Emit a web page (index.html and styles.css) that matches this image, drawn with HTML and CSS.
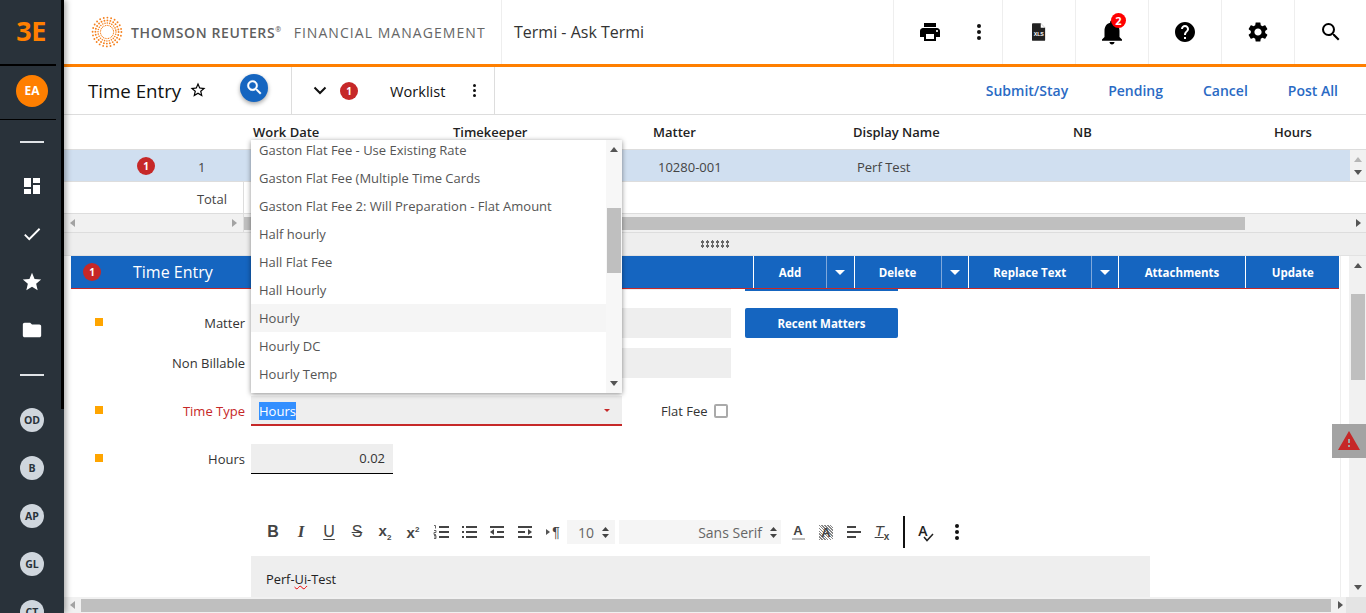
FILE: index.html
```html
<!DOCTYPE html>
<html lang="en">

<head>
    <meta charset="utf-8">
    <title>Time Entry</title>
    <link rel="stylesheet" href="styles.css">
</head>

<body>
    <div class="app">
        <nav class="sidebar">
            <div class="brand">3E</div>
            <div class="user-wrap"><div class="user">EA</div></div>
            <div class="nav-rule first"></div>
            <div class="nav-icon">
                <svg width="16" height="16" viewBox="0 0 16 16"><path fill="#fff" d="M0 0h7v9H0zM9 0h7v5H9zM9 7h7v9H9zM0 11h7v5H0z"/></svg>
            </div>
            <div class="nav-icon">
                <svg width="22" height="22" viewBox="0 0 24 24"><path fill="#fff" d="M9 16.17L4.83 12l-1.42 1.41L9 19 21 7l-1.41-1.41z"/></svg>
            </div>
            <div class="nav-icon">
                <svg width="22" height="22" viewBox="0 0 24 24"><path fill="#fff" d="M12 17.27L18.18 21l-1.64-7.03L22 9.24l-7.19-.61L12 2 9.19 8.63 2 9.24l5.46 4.73L5.82 21z"/></svg>
            </div>
            <div class="nav-icon">
                <svg width="22" height="22" viewBox="0 0 24 24"><path fill="#fff" d="M10 4H4c-1.1 0-1.99.9-1.99 2L2 18c0 1.1.9 2 2 2h16c1.1 0 2-.9 2-2V8c0-1.1-.9-2-2-2h-8l-2-2z"/></svg>
            </div>
            <div class="nav-rule second"></div>
            <div class="nav-pill">OD</div>
            <div class="nav-pill">B</div>
            <div class="nav-pill">AP</div>
            <div class="nav-pill">GL</div>
            <div class="nav-pill">CT</div>
            <div class="nav-scroll"></div>
        </nav>

        <main class="content">
            <header class="topbar">
                <div class="logo">
                    <svg width="32" height="32" viewBox="0 0 32 32">
                        <g fill="none" stroke="#f58220" stroke-linecap="round">
                            <circle cx="16" cy="16" r="14.4" stroke-width="1.9" stroke-dasharray="0 3.77"/>
                            <circle cx="16" cy="16" r="11.6" stroke-width="1.9" stroke-dasharray="0 3.04"/>
                            <circle cx="16" cy="16" r="9" stroke-width="1.6" stroke-dasharray="0 2.36"/>
                            <circle cx="16" cy="16" r="6.6" stroke-width="1.2" stroke-dasharray="0 1.73"/>
                        </g>
                    </svg>
                    <span class="logo-tr">THOMSON REUTERS<sup>®</sup></span>
                    <span class="logo-fm">FINANCIAL MANAGEMENT</span>
                </div>
                <div class="app-title">Termi - Ask Termi</div>
                <div class="top-cell wide">
                    <svg width="24" height="24" viewBox="0 0 24 24"><path d="M19 8H5c-1.66 0-3 1.34-3 3v6h4v4h12v-4h4v-6c0-1.66-1.34-3-3-3zm-3 11H8v-5h8v5zm3-7c-.55 0-1-.45-1-1s.45-1 1-1 1 .45 1 1-.45 1-1 1zm-1-9H6v4h12V3z"/></svg>
                    <span class="kebab"><i></i><i></i><i></i></span>
                </div>
                <div class="top-cell">
                    <svg width="14" height="18" viewBox="0 0 16 20">
                        <path fill="#222" d="M1 0h9l5 5v14a1 1 0 0 1-1 1H1a1 1 0 0 1-1-1V1a1 1 0 0 1 1-1z"/>
                        <path fill="#fff" d="M10 0l5 5h-5z"/>
                        <text x="7.7" y="14.5" class="xls-text">XLS</text>
                    </svg>
                </div>
                <div class="top-cell">
                    <span class="bell">
                        <svg width="30" height="30" viewBox="0 0 24 24"><path d="M12 22c1.1 0 2-.9 2-2h-4c0 1.1.9 2 2 2zm6-6v-5c0-3.07-1.63-5.64-4.5-6.32V4c0-.83-.67-1.5-1.5-1.5s-1.5.67-1.5 1.5v.68C7.64 5.36 6 7.92 6 11v5l-2 2v1h16v-1l-2-2z"/></svg>
                        <b class="bell-count">2</b>
                    </span>
                </div>
                <div class="top-cell">
                    <svg width="24" height="24" viewBox="0 0 24 24"><path d="M12 2C6.48 2 2 6.48 2 12s4.48 10 10 10 10-4.48 10-10S17.52 2 12 2zm1 17h-2v-2h2v2zm2.07-7.75l-.9.92C13.45 12.9 13 13.5 13 15h-2v-.5c0-1.1.45-2.1 1.17-2.83l1.24-1.26c.37-.36.59-.86.59-1.41 0-1.1-.9-2-2-2s-2 .9-2 2H8c0-2.21 1.79-4 4-4s4 1.79 4 4c0 .88-.36 1.68-.93 2.25z"/></svg>
                </div>
                <div class="top-cell">
                    <svg width="24" height="24" viewBox="0 0 24 24"><path d="M19.14 12.94c.04-.3.06-.61.06-.94 0-.32-.02-.64-.07-.94l2.03-1.58c.18-.14.23-.41.12-.61l-1.92-3.32c-.12-.22-.37-.29-.59-.22l-2.39.96c-.5-.38-1.03-.7-1.62-.94l-.36-2.54c-.04-.24-.24-.41-.48-.41h-3.84c-.24 0-.43.17-.47.41l-.36 2.54c-.59.24-1.13.57-1.62.94l-2.39-.96c-.22-.08-.47 0-.59.22L2.74 8.87c-.12.21-.08.47.12.61l2.03 1.58c-.05.3-.09.63-.09.94s.02.64.07.94l-2.03 1.58c-.18.14-.23.41-.12.61l1.92 3.32c.12.22.37.29.59.22l2.39-.96c.5.38 1.03.7 1.62.94l.36 2.54c.05.24.24.41.48.41h3.84c.24 0 .44-.17.47-.41l.36-2.54c.59-.24 1.13-.56 1.62-.94l2.39.96c.22.08.47 0 .59-.22l1.92-3.32c.12-.22.07-.47-.12-.61l-2.01-1.58zM12 15.6c-1.98 0-3.6-1.62-3.6-3.6s1.62-3.6 3.6-3.6 3.6 1.62 3.6 3.6-1.62 3.6-3.6 3.6z"/></svg>
                </div>
                <div class="top-cell last">
                    <svg width="24" height="24" viewBox="0 0 24 24"><path d="M15.5 14h-.79l-.28-.27A6.471 6.471 0 0 0 16 9.5 6.5 6.5 0 1 0 9.5 16c1.61 0 3.09-.59 4.23-1.57l.27.28v.79l5 4.99L20.49 19l-4.99-5zm-6 0C7.01 14 5 11.99 5 9.5S7.01 5 9.5 5 14 7.01 14 9.5 11.99 14 9.5 14z"/></svg>
                </div>
            </header>

            <section class="subbar">
                <div class="sub-title">
                    <h1>Time Entry</h1>
                    <svg width="18" height="18" viewBox="0 0 24 24"><path d="M22 9.24l-7.19-.62L12 2 9.19 8.63 2 9.24l5.46 4.73L5.82 21 12 17.27 18.18 21l-1.63-7.03L22 9.24zM12 15.4l-3.76 2.27 1-4.28-3.32-2.88 4.38-.38L12 6.1l1.71 4.04 4.38.38-3.32 2.88 1 4.28L12 15.4z"/></svg>
                    <button class="round-search">
                        <svg width="19" height="19" viewBox="0 0 24 24"><path fill="#fff" stroke="#fff" stroke-width=".6" d="M15.5 14h-.79l-.28-.27A6.471 6.471 0 0 0 16 9.5 6.5 6.5 0 1 0 9.5 16c1.61 0 3.09-.59 4.23-1.57l.27.28v.79l5 4.99L20.49 19l-4.99-5zm-6 0C7.01 14 5 11.99 5 9.5S7.01 5 9.5 5 14 7.01 14 9.5 11.99 14 9.5 14z"/></svg>
                    </button>
                </div>
                <div class="worklist">
                    <svg class="chev" width="14" height="9" viewBox="0 0 14 9"><path fill="none" stroke="#111" stroke-width="2" d="M1.5 1.5L7 7l5.5-5.5"/></svg>
                    <span class="badge">1</span>
                    <span class="worklist-name">Worklist</span>
                    <span class="kebab small"><i></i><i></i><i></i></span>
                </div>
                <div class="actions">
                    <a>Submit/Stay</a>
                    <a>Pending</a>
                    <a>Cancel</a>
                    <a>Post All</a>
                </div>
            </section>

            <div class="grid-row grid-head">
                <span></span><span>Work Date</span><span>Timekeeper</span><span>Matter</span><span>Display Name</span><span>NB</span><span>Hours</span>
            </div>
            <div class="sel-row">
                <div class="sel-index">
                    <span class="badge">1</span>
                    <span class="row-no">1</span>
                </div>
                <span class="cell-matter">10280-001</span>
                <span class="cell-name">Perf Test</span>
                <div class="row-scroll">
                    <i class="arrow up faded"></i>
                    <i class="arrow down"></i>
                </div>
            </div>
            <div class="total-row"><span class="total-label">Total</span></div>
            <div class="hscroll">
                <div class="frozen">
                    <i class="arrow left"></i>
                    <i class="arrow right"></i>
                </div>
                <div class="hscroll-track">
                    <div class="thumb"></div>
                    <i class="arrow right dark"></i>
                </div>
            </div>
            <div class="splitter"><span class="grip"></span></div>

            <section class="panel">
                <div class="panel-body">
                    <div class="panel-head">
                        <span class="badge">1</span>
                        <span class="panel-title">Time Entry</span>
                        <div class="panel-btns">
                            <span class="pbtn add">Add</span><span class="pcaret"><i></i></span>
                            <span class="pbtn del">Delete</span><span class="pcaret"><i></i></span>
                            <span class="pbtn rep">Replace Text</span><span class="pcaret"><i></i></span>
                            <span class="pbtn att">Attachments</span>
                            <span class="pbtn upd">Update</span>
                        </div>
                    </div>

                    <div class="form">
                        <div class="clip-row">
                            <span class="clip-input"></span>
                            <span class="clip-btn"></span>
                        </div>
                        <div class="form-row">
                            <span class="mark"></span>
                            <label>Matter</label>
                            <span class="input long"></span>
                            <button class="recent">Recent Matters</button>
                        </div>
                        <div class="form-row">
                            <span class="mark none"></span>
                            <label>Non Billable</label>
                            <span class="input long"></span>
                        </div>
                        <div class="form-row gap-18">
                            <span class="mark"></span>
                            <label class="err">Time Type</label>
                            <span class="input select">
                                <span class="selected-text">Hours</span>
                                <i class="caret-red"></i>
                            </span>
                            <span class="flat-label">Flat Fee</span>
                            <span class="check"></span>
                        </div>
                        <div class="form-row gap-18">
                            <span class="mark"></span>
                            <label>Hours</label>
                            <span class="input hours">0.02</span>
                        </div>

                        <div class="toolbar">
                            <span class="tb tb-b">B</span>
                            <span class="tb tb-i">I</span>
                            <span class="tb tb-u">U</span>
                            <span class="tb tb-s">S</span>
                            <span class="tb tb-x"><span>x<sub>2</sub></span></span>
                            <span class="tb tb-x"><span>x<sup>2</sup></span></span>
                            <span class="tb">
                                <svg width="16" height="14" viewBox="0 0 16 14"><path fill="none" stroke="#444" stroke-width="1.8" d="M6 2h10M6 7h10M6 12h10"/><path fill="none" stroke="#444" stroke-width=".8" d="M1 .5h1.5v3M1 5.5h2v2H1v2h2M1 10.5h2v3H1M1 12h2"/></svg>
                            </span>
                            <span class="tb">
                                <svg width="16" height="14" viewBox="0 0 16 14"><path stroke="#444" stroke-width="1.8" d="M5 2h11M5 7h11M5 12h11M1 2h2M1 7h2M1 12h2"/></svg>
                            </span>
                            <span class="tb">
                                <svg width="16" height="14" viewBox="0 0 16 14"><path stroke="#444" stroke-width="1.8" d="M1 2h14M8 7h7M1 12h14"/><path fill="#444" d="M5 4v6L1 7z"/></svg>
                            </span>
                            <span class="tb">
                                <svg width="16" height="14" viewBox="0 0 16 14"><path stroke="#444" stroke-width="1.8" d="M1 2h14M1 7h7M1 12h14"/><path fill="#444" d="M11 4v6l4-3z"/></svg>
                            </span>
                            <span class="tb tb-para"><i class="arrow right dark tiny"></i>¶</span>
                            <span class="tb-select size">10
                                <svg class="updown" width="7" height="11" viewBox="0 0 7 11"><path fill="#444" d="M3.5 0L7 4H0zM3.5 11L0 7h7z"/></svg>
                            </span>
                            <span class="tb-select family">Sans Serif
                                <svg class="updown" width="7" height="11" viewBox="0 0 7 11"><path fill="#444" d="M3.5 0L7 4H0zM3.5 11L0 7h7z"/></svg>
                            </span>
                            <span class="tb tb-color">A</span>
                            <span class="tb tb-hatch"><span>A</span></span>
                            <span class="tb">
                                <svg width="16" height="14" viewBox="0 0 16 14"><path stroke="#444" stroke-width="1.8" d="M1 2h9M1 7h14M1 12h9"/></svg>
                            </span>
                            <span class="tb tb-clean"><span><span class="clean-t">T</span><sub>x</sub></span></span>
                            <span class="tb-sep"></span>
                            <span class="tb tb-spell">
                                <span>A</span>
                                <svg width="11" height="9" viewBox="0 0 11 9"><path fill="none" stroke="#222" stroke-width="1.5" d="M1 4l3 3.5L10 1"/></svg>
                            </span>
                            <span class="kebab tb-more"><i></i><i></i><i></i></span>
                        </div>

                        <div class="editor">Perf-<span class="misspelt">Ui</span>-Test</div>
                    </div>
                </div>

                <div class="vscroll">
                    <i class="arrow up"></i>
                    <div class="vthumb"></div>
                    <i class="arrow down"></i>
                </div>
            </section>

            <div class="page-scroll">
                <i class="arrow left"></i>
                <div class="page-thumb"></div>
                <i class="arrow right dark"></i>
                <span class="scroll-corner"></span>
            </div>
        </main>

        <div class="dropdown">
            <ul class="options">
                <li>Gaston Flat Fee - Use Existing Rate</li>
                <li>Gaston Flat Fee (Multiple Time Cards</li>
                <li>Gaston Flat Fee 2: Will Preparation - Flat Amount</li>
                <li>Half hourly</li>
                <li>Hall Flat Fee</li>
                <li>Hall Hourly</li>
                <li class="hover">Hourly</li>
                <li>Hourly DC</li>
                <li>Hourly Temp</li>
            </ul>
            <div class="drop-scroll">
                <i class="arrow up dark"></i>
                <div class="drop-thumb"></div>
                <i class="arrow down dark"></i>
            </div>
        </div>

        <div class="alert-tab">
            <svg width="24" height="24" viewBox="0 0 24 24"><path fill="#c62828" d="M1 21h22L12 2 1 21zm12-3h-2v-2h2v2zm0-4h-2v-4h2v4z"/></svg>
        </div>
    </div>
</body>

</html>
```

FILE: styles.css
```css
* {
    box-sizing: border-box;
}

html,
body {
    margin: 0;
    padding: 0;
    height: 100%;
    overflow: hidden;
    font-family: "Open Sans", sans-serif;
    color: #222;
    background: #fff;
}

.app {
    position: relative;
    display: flex;
    width: 1366px;
    height: 613px;
    overflow: hidden;
}

/* left nav */
.sidebar {
    position: relative;
    z-index: 2;
    flex: 0 0 64px;
    height: 100%;
    overflow: hidden;
    background: #29323a;
    box-shadow: 2px 0 6px rgba(0, 0, 0, 0.35);
    display: flex;
    flex-direction: column;
    align-items: center;
}

.nav-scroll {
    position: absolute;
    top: 0;
    right: 0;
    width: 3px;
    height: 409px;
    background: #000;
}

.brand {
    flex: none;
    width: 100%;
    height: 66px;
    padding-right: 2px;
    border-bottom: 2px solid #000;
    border-image: linear-gradient(to right, #000 55px, transparent 55px) 1;
    color: #ff7f00;
    font-size: 27px;
    font-weight: 700;
    line-height: 62px;
    text-align: center;
    letter-spacing: -0.5px;
}

.user-wrap {
    flex: none;
    width: 100%;
    height: 54px;
    padding-bottom: 3px;
    display: flex;
    align-items: center;
    justify-content: center;
    border-bottom: 1px solid #000;
    border-image: linear-gradient(to right, #000 55px, transparent 55px) 1;
}

.user {
    width: 32px;
    height: 32px;
    border-radius: 50%;
    background: #ff7f00;
    color: #fff;
    font-size: 12px;
    font-weight: 700;
    line-height: 32px;
    text-align: center;
}

.nav-rule {
    flex: none;
    width: 24px;
    height: 2px;
    background: #dfe3e6;
}

.nav-rule.first {
    margin-top: 21px;
    margin-bottom: 19px;
}

.nav-rule.second {
    margin-top: 20px;
    margin-bottom: 32px;
}

.nav-icon {
    flex: none;
    width: 100%;
    height: 48px;
    display: flex;
    align-items: center;
    justify-content: center;
}

.nav-pill {
    flex: none;
    width: 24px;
    height: 24px;
    margin-bottom: 24px;
    border-radius: 50%;
    background: #cfd6dd;
    color: #29323a;
    font-size: 10.5px;
    font-weight: 700;
    line-height: 24px;
    text-align: center;
}

/* main column */
.content {
    flex: 1;
    min-width: 0;
    display: flex;
    flex-direction: column;
    height: 100%;
}

.topbar {
    flex: 0 0 67px;
    display: flex;
    border-bottom: 3px solid #ff7f00;
}

.logo {
    width: 438px;
    display: flex;
    align-items: center;
    padding-left: 27px;
    border-right: 1px solid #eee;
}

.logo-tr {
    margin-left: 8px;
    color: #5f5f5f;
    font-size: 14px;
    font-weight: 600;
    letter-spacing: 0.6px;
    white-space: nowrap;
}

.logo-tr sup {
    font-size: 7px;
    line-height: 0;
}

.logo-fm {
    margin-left: 12px;
    color: #666;
    font-size: 14px;
    font-weight: 500;
    letter-spacing: 1.05px;
    white-space: nowrap;
}

.app-title {
    width: 391px;
    padding-left: 12px;
    font-size: 16px;
    line-height: 64px;
    color: #333;
}

.top-cell {
    width: 73px;
    display: flex;
    align-items: center;
    justify-content: center;
    border-left: 1px solid #eee;
}

.top-cell.wide {
    width: 109px;
    justify-content: flex-start;
    padding-left: 24px;
    gap: 35px;
}

.top-cell.last {
    flex: 1;
}

.kebab {
    display: inline-flex;
    flex-direction: column;
    gap: 2px;
}

.kebab i {
    width: 4px;
    height: 4px;
    border-radius: 50%;
    background: #111;
}

.kebab.small {
    gap: 2px;
}

.kebab.small i {
    width: 3px;
    height: 3px;
}

.xls-text {
    fill: #fff;
    font-family: "Liberation Sans", sans-serif;
    font-size: 6px;
    font-weight: 700;
    text-anchor: middle;
}

.bell {
    position: relative;
    display: flex;
}

.bell-count {
    position: absolute;
    top: -4px;
    right: 1px;
    width: 15px;
    height: 15px;
    border-radius: 50%;
    background: #f00;
    color: #fff;
    font-size: 11px;
    line-height: 15px;
    text-align: center;
}

/* sub header */
.subbar {
    flex: 0 0 48px;
    display: flex;
    border-bottom: 1px solid #ddd;
}

.sub-title {
    width: 228px;
    display: flex;
    align-items: center;
    padding-left: 24px;
    padding-bottom: 1px;
    border-right: 1px solid #ddd;
}

.sub-title h1 {
    margin: 0;
    font-size: 18.7px;
    font-weight: 400;
    color: #111;
}

.sub-title svg {
    margin-left: 8px;
}

.round-search {
    width: 28px;
    height: 28px;
    margin-left: 33px;
    margin-bottom: 5px;
    padding: 0;
    border: 0;
    border-radius: 50%;
    background: #1565c0;
    box-shadow: 0 2px 4px rgba(0, 0, 0, 0.35);
    display: flex;
    align-items: center;
    justify-content: center;
}

.round-search svg {
    margin: 0;
}

.worklist {
    width: 203px;
    display: flex;
    align-items: center;
    padding-left: 21px;
    border-right: 1px solid #ddd;
}

.badge {
    flex: none;
    width: 18px;
    height: 18px;
    border-radius: 50%;
    background: #c62828;
    color: #fff;
    font-size: 10px;
    font-weight: 700;
    line-height: 18px;
    text-align: center;
}

.worklist .badge {
    margin-left: 13px;
}

.worklist-name {
    margin-left: 32px;
    font-size: 14.6px;
    color: #111;
}

.worklist .kebab {
    margin-left: 28px;
}

.actions {
    flex: 1;
    display: flex;
    align-items: center;
    justify-content: flex-end;
    gap: 40px;
    padding-right: 28px;
    padding-bottom: 1px;
}

.actions a {
    color: #2a6ac4;
    font-size: 14px;
    font-weight: 600;
}

/* grid */
.grid-row {
    display: grid;
    grid-template-columns: 189px 200px 200px 200px 220px 201px 1fr;
}

.grid-head {
    flex: 0 0 34px;
    align-items: center;
    font-size: 13px;
    font-weight: 600;
    color: #222;
}

.sel-row {
    flex: 0 0 33px;
    display: flex;
    align-items: center;
    background: #d0dff0;
    border-top: 1px solid #ddd;
    border-bottom: 1px solid #ddd;
    font-size: 13px;
    color: #444;
}

.sel-index {
    width: 594px;
    display: flex;
    align-items: center;
    padding-left: 73px;
}

.row-no {
    margin-left: 43px;
    margin-top: 3px;
}

.cell-name {
    margin-left: 135px;
    margin-top: 3px;
    flex: 1;
}

.cell-matter {
    width: 64px;
    margin-top: 3px;
    white-space: nowrap;
}

.row-scroll {
    width: 16px;
    height: 100%;
    background: #f1f1f1;
    display: flex;
    flex-direction: column;
    align-items: center;
    justify-content: center;
    gap: 8px;
}

.total-row {
    flex: 0 0 32px;
    display: flex;
    border-bottom: 1px solid #ddd;
}

.total-label {
    width: 180px;
    height: 31px;
    border-right: 1px solid #ddd;
    padding-right: 16px;
    font-size: 13px;
    line-height: 34px;
    text-align: right;
    color: #444;
}

.hscroll {
    flex: 0 0 19px;
    display: flex;
    background: #f1f1f1;
    border-bottom: 1px solid #ddd;
}

.frozen {
    width: 180px;
    display: flex;
    align-items: center;
    justify-content: space-between;
    padding: 0 6px;
    border-right: 1px solid #ddd;
}

.hscroll-track {
    flex: 1;
    display: flex;
    align-items: center;
}

.thumb {
    width: 1001px;
    height: 13px;
    background: #bfbfbf;
}

.hscroll-track .arrow {
    margin-left: auto;
    margin-right: 5px;
}

.splitter {
    flex: 0 0 23px;
    display: flex;
    align-items: center;
    justify-content: center;
    background: #eee;
    border-bottom: 1px solid #e2e2e2;
}

.grip {
    width: 30px;
    height: 8px;
    background-image: radial-gradient(circle, #666 1.5px, transparent 1.7px);
    background-size: 5px 4px;
}

/* small triangles for the scroll bars */
.arrow {
    flex: none;
    display: block;
    width: 0;
    height: 0;
    border: 4px solid transparent;
}

.arrow.up {
    border-top: 0;
    border-bottom: 5px solid #555;
}

.arrow.down {
    border-bottom: 0;
    border-top: 5px solid #555;
}

.arrow.left {
    border-left: 0;
    border-right: 5px solid #a3a3a3;
}

.arrow.right {
    border-right: 0;
    border-left: 5px solid #a3a3a3;
}

.arrow.right.dark {
    border-left-color: #555;
}

.arrow.up.faded {
    border-bottom-color: #b5b5b5;
}

/* detail panel */
.panel {
    flex: 1;
    min-height: 0;
    display: flex;
    padding-left: 7px;
}

.panel-body {
    width: 1270px;
    overflow: hidden;
    border-right: 1px solid #eee;
}

.panel-head {
    width: 1268px;
    height: 33px;
    display: flex;
    align-items: center;
    background: #1565c0;
    border-bottom: 1px solid #c62828;
    color: #fff;
}

.panel-head .badge {
    margin-left: 12px;
}

.panel-title {
    flex: none;
    width: 620px;
    margin-left: 32px;
    font-size: 16px;
    line-height: 31px;
}

.panel-btns {
    display: flex;
    height: 100%;
    font-size: 11.5px;
    font-weight: 700;
}

.pbtn {
    flex: none;
    display: flex;
    align-items: center;
    justify-content: center;
    border-left: 1px solid #fff;
}

.pbtn.add {
    width: 73px;
}

.pbtn.del {
    width: 87px;
}

.pbtn.rep {
    width: 122.5px;
}

.pbtn.att {
    width: 127px;
}

.pbtn.upd {
    width: 94.5px;
}

.pcaret {
    flex: none;
    width: 27.5px;
    display: flex;
    align-items: center;
    justify-content: center;
    border-left: 1px solid #7fa8db;
}

.pcaret i {
    width: 0;
    height: 0;
    border: 5px solid transparent;
    border-bottom: 0;
    border-top: 5px solid #fff;
}

.clip-row {
    display: flex;
    height: 19px;
    padding-left: 180px;
}

.clip-input {
    width: 480px;
    height: 1px;
    background: #eee;
}

.clip-btn {
    width: 153px;
    height: 2px;
    margin-left: 14px;
    background: #1565c0;
}

.form-row {
    display: flex;
    align-items: center;
    height: 30px;
    margin-bottom: 10px;
}

.form-row.gap-18 {
    margin-top: 18px;
    margin-bottom: 18px;
}

.mark {
    flex: none;
    align-self: flex-start;
    width: 8px;
    height: 8px;
    margin-top: 10px;
    margin-left: 24px;
    background: #ffa500;
}

.mark.none {
    background: transparent;
}

.form-row label {
    width: 142px;
    text-align: right;
    font-size: 13px;
    color: #333;
}

.form-row label.err {
    color: #c62828;
}

.input {
    display: block;
    height: 30px;
    margin-left: 6px;
    background: #eee;
    font-size: 13px;
}

.input.long {
    width: 480px;
}

.input.select {
    width: 371px;
    display: flex;
    align-items: center;
    justify-content: space-between;
    padding: 1px 12px 0 8px;
    border-bottom: 2px solid #c62828;
}

.selected-text {
    background: #338fff;
    color: #fff;
}

.caret-red {
    width: 0;
    height: 0;
    border: 3px solid transparent;
    border-bottom: 0;
    border-top: 3px solid #c62828;
}

.input.hours {
    width: 142px;
    padding-right: 8px;
    border-bottom: 1px solid #000;
    line-height: 29px;
    text-align: right;
    color: #333;
}

.recent {
    width: 153px;
    height: 30px;
    margin-left: 14px;
    padding: 0;
    border: 0;
    border-radius: 2px;
    background: #1565c0;
    color: #fff;
    font: 700 11.5px "Open Sans", sans-serif;
}

.flat-label {
    margin-left: 39px;
    font-size: 13px;
    color: #333;
}

.check {
    width: 14px;
    height: 14px;
    margin-left: 6px;
    border: 2px solid #aaa;
    border-radius: 2px;
}

/* rich text toolbar */
.toolbar {
    display: flex;
    align-items: center;
    height: 32px;
    margin-top: 42px;
    margin-left: 188px;
}

.tb {
    flex: none;
    width: 28px;
    height: 28px;
    display: flex;
    align-items: center;
    justify-content: center;
    color: #444;
    font-size: 14px;
}

.tb-b {
    font-family: "Liberation Sans", sans-serif;
    font-weight: 700;
    font-size: 16px;
}

.tb-i {
    font-family: "Liberation Serif", serif;
    font-style: italic;
    font-weight: 700;
    font-size: 17px;
}

.tb-u {
    font-family: "Liberation Sans", sans-serif;
    font-size: 16px;
    text-decoration: underline;
    text-underline-offset: 2px;
}

.tb-s {
    font-family: "Liberation Sans", sans-serif;
    font-size: 16px;
    text-decoration: line-through;
}

.tb-x {
    font-family: "Liberation Sans", sans-serif;
    font-weight: 700;
    font-size: 15px;
}

.tb-x sub,
.tb-x sup {
    font-size: 8px;
}

.tb-para {
    gap: 2px;
    font-size: 14px;
    font-family: "Liberation Sans", sans-serif;
}

.arrow.tiny {
    border-width: 3px;
    border-right: 0;
    border-left: 4px solid #444;
}

.tb-select {
    flex: none;
    height: 24px;
    display: flex;
    align-items: center;
    justify-content: flex-end;
    background: #f5f5f5;
    color: #666;
    font-size: 14px;
    padding-right: 4px;
}

.tb-select.size {
    width: 48px;
    margin-right: 4px;
    justify-content: flex-start;
    padding-left: 11px;
}

.tb-select.family {
    width: 162px;
    margin-right: 3px;
}

.updown {
    flex: none;
    margin-left: 8px;
}

.tb-color {
    font-family: "Liberation Sans", sans-serif;
    font-weight: 700;
    font-size: 13px;
    line-height: 14px;
    flex-direction: column;
}

.tb-color::after {
    content: "";
    width: 13px;
    height: 2px;
    background: #bbb;
}

.tb-hatch span {
    padding: 0 2px;
    font-family: "Liberation Sans", sans-serif;
    font-weight: 700;
    font-size: 13px;
    line-height: 15px;
    background: repeating-linear-gradient(45deg, #888 0 1px, #fff 1px 2px);
}

.tb-clean {
    font-family: "Liberation Sans", sans-serif;
    font-size: 15px;
}

.clean-t {
    font-style: italic;
    text-decoration: underline;
}

.tb-clean sub {
    font-size: 10px;
    font-weight: 700;
}

.tb-sep {
    flex: none;
    width: 2px;
    height: 32px;
    margin: 0 8px 0 7px;
    background: #111;
}

.tb-spell {
    position: relative;
    width: 28px;
    font-size: 14px;
    font-weight: 600;
    color: #222;
    padding-right: 8px;
    padding-bottom: 3px;
}

.tb-spell svg {
    position: absolute;
    right: 7px;
    bottom: 4px;
}

.tb-more {
    margin-left: 14px;
}

.editor {
    width: 899px;
    height: 60px;
    margin-top: 8px;
    margin-left: 180px;
    padding: 14px 15px;
    background: #eee;
    font-size: 12.8px;
    color: #222;
}

.misspelt {
    text-decoration: underline wavy #e00;
    text-decoration-thickness: 1px;
}

.vscroll {
    flex: 1;
    margin-left: 8px;
    background: #f1f1f1;
    display: flex;
    flex-direction: column;
    align-items: center;
    padding: 7px 0 7px;
}

.vthumb {
    width: 14px;
    height: 86px;
    margin-top: 26px;
    margin-bottom: auto;
    background: #bfbfbf;
}

.page-scroll {
    flex: 0 0 16px;
    display: flex;
    align-items: center;
    padding-left: 6px;
    background: #f1f1f1;
}

.page-thumb {
    width: 1250px;
    height: 13px;
    margin-left: 6px;
    background: #bfbfbf;
}

.page-scroll .arrow.right {
    margin-left: 7px;
}

.scroll-corner {
    align-self: stretch;
    flex: 1;
    margin-left: 3px;
    background: #e4e4e4;
}

/* open time type list, over the form */
.dropdown {
    position: absolute;
    top: 140px;
    left: 251px;
    z-index: 5;
    width: 371px;
    height: 253px;
    display: flex;
    overflow: hidden;
    background: #fff;
    box-shadow: 0 1px 5px rgba(0, 0, 0, 0.45);
}

.options {
    flex: 1;
    margin: -4px 0 0;
    padding: 0;
    list-style: none;
}

.options li {
    height: 28px;
    padding-left: 8px;
    color: #555;
    font-size: 13px;
    line-height: 29px;
    white-space: nowrap;
}

.options li.hover {
    background: #f5f5f5;
}

.drop-scroll {
    flex: 0 0 16px;
    display: flex;
    flex-direction: column;
    align-items: center;
    background: #f7f7f7;
    padding: 7px 0;
}

.drop-thumb {
    width: 14px;
    height: 65px;
    margin-top: 56px;
    margin-bottom: auto;
    background: #bfbfbf;
}

/* floating alert tab at the right edge */
.alert-tab {
    position: absolute;
    top: 424px;
    right: 0;
    z-index: 4;
    width: 34px;
    height: 34px;
    display: flex;
    align-items: center;
    justify-content: center;
    background: #a3a3a3;
}
```
